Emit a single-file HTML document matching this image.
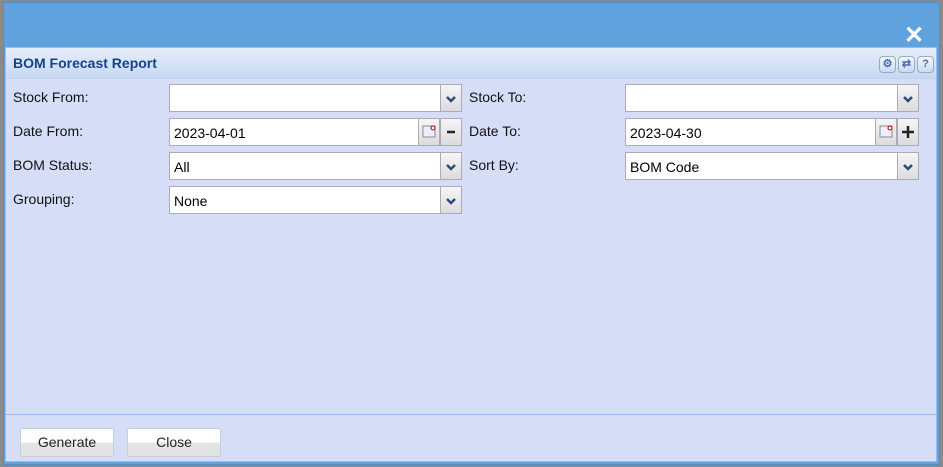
<!DOCTYPE html>
<html><head><style>
*{box-sizing:border-box;margin:0;padding:0}
body{width:943px;height:467px;background:#8a8a8a;position:relative;overflow:hidden;font-family:"Liberation Sans",sans-serif}
.win{position:absolute;left:3px;top:2px;width:937px;height:463px;background:#5fa2dd;border:1px solid #4a8fcf}
.x{position:absolute;left:900px;top:18px;color:#fff;font-size:24px;font-weight:bold}
.panel{position:absolute;left:5px;top:47px;width:932px;height:415px;background:#d5ddf7;border:1px solid #99bbe8}
.hdr{height:31px;background:linear-gradient(#e6eefb,#c8d8f3);border-bottom:1px solid #c2d3ee;padding:7px 0 0 7px;font-weight:bold;color:#15428b;font-size:14px}
.tools{position:absolute;right:2px;top:6px}
.tools span{display:inline-block;width:17px;height:17px;margin-left:2px;border:1px solid #9ab;border-radius:4px;background:linear-gradient(#f3f7fd,#c9daf4);color:#4a6fa8;font-size:11px;font-weight:bold;text-align:center;line-height:15px}
.lbl{position:absolute;font-size:14px;color:#111}
.f{position:absolute;height:28px;background:#fff;border:1px solid #aab;font-size:14px;padding:6px 4px;color:#000}
.b{position:absolute;top:-1px;width:22px;height:28px;border:1px solid #aab;background:linear-gradient(#f6f6f6,#dcdcdc)}
.foot{position:absolute;left:0;top:366px;width:930px;border-top:1px solid #9ab8e6}
.btn{position:absolute;top:380px;width:94px;height:29px;border:1px solid #c8ccd4;border-radius:3px;background:linear-gradient(#fff 50%,#e4e4e4 50%);font-size:14px;text-align:center;line-height:27px;color:#222}
</style></head><body>
<div class="win"><div class="x">✕</div></div>
<div class="panel">
<div class="hdr">BOM Forecast Report</div>
<div class="tools"><span>⚙</span><span>⇄</span><span>?</span></div>
<div class="lbl" style="left:7px;top:41px">Stock From:</div>
<div class="lbl" style="left:7px;top:75px">Date From:</div>
<div class="lbl" style="left:7px;top:109px">BOM Status:</div>
<div class="lbl" style="left:7px;top:143px">Grouping:</div>
<div class="lbl" style="left:463px;top:41px">Stock To:</div>
<div class="lbl" style="left:463px;top:75px">Date To:</div>
<div class="lbl" style="left:463px;top:109px">Sort By:</div>
<div class="f" style="left:163px;top:36px;width:293px"><div class="b" style="right:-1px"><svg width="20" height="26"><path d="M6 12l4 4 4-4" stroke="#2d4a80" stroke-width="2.5" fill="none"/></svg></div></div>
<div class="f" style="left:163px;top:70px;width:293px">2023-04-01<div class="b" style="right:21px"><svg width="20" height="26"><rect x="4" y="7" width="12" height="11" fill="#eef" stroke="#889"/><circle cx="14" cy="9" r="2" fill="#fff" stroke="#a00"/></svg></div><div class="b" style="right:-1px"><svg width="20" height="26"><path d="M6 13h8" stroke="#222" stroke-width="2.5"/></svg></div></div>
<div class="f" style="left:163px;top:104px;width:293px">All<div class="b" style="right:-1px"><svg width="20" height="26"><path d="M6 12l4 4 4-4" stroke="#2d4a80" stroke-width="2.5" fill="none"/></svg></div></div>
<div class="f" style="left:163px;top:138px;width:293px">None<div class="b" style="right:-1px"><svg width="20" height="26"><path d="M6 12l4 4 4-4" stroke="#2d4a80" stroke-width="2.5" fill="none"/></svg></div></div>
<div class="f" style="left:619px;top:36px;width:294px"><div class="b" style="right:-1px"><svg width="20" height="26"><path d="M6 12l4 4 4-4" stroke="#2d4a80" stroke-width="2.5" fill="none"/></svg></div></div>
<div class="f" style="left:619px;top:70px;width:294px">2023-04-30<div class="b" style="right:21px"><svg width="20" height="26"><rect x="4" y="7" width="12" height="11" fill="#eef" stroke="#889"/><circle cx="14" cy="9" r="2" fill="#fff" stroke="#a00"/></svg></div><div class="b" style="right:-1px"><svg width="20" height="26"><path d="M4 13h12M10 7v12" stroke="#222" stroke-width="2.5"/></svg></div></div>
<div class="f" style="left:619px;top:104px;width:294px">BOM Code<div class="b" style="right:-1px"><svg width="20" height="26"><path d="M6 12l4 4 4-4" stroke="#2d4a80" stroke-width="2.5" fill="none"/></svg></div></div>
<div class="foot"></div>
<div class="btn" style="left:14px">Generate</div>
<div class="btn" style="left:121px">Close</div>
</div>
</body></html>
